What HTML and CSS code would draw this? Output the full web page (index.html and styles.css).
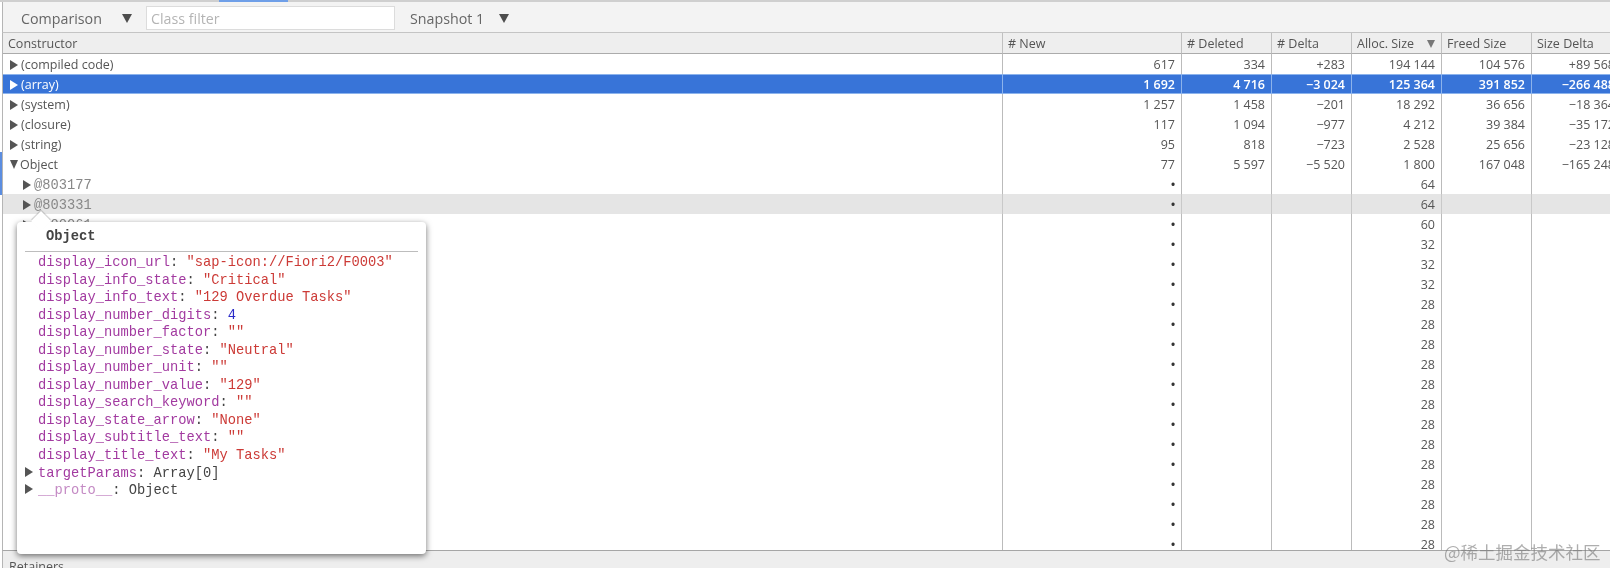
FILE: index.html
```html
<!DOCTYPE html>
<html lang="en">
<head>
<meta charset="utf-8">
<title>Heap snapshot comparison</title>
<link rel="stylesheet" href="styles.css">
</head>
<body>
<div class="app">
  <div class="tabstrip"><span class="tab-marker"></span></div>
  <div class="toolbar">
    <span class="tool-label label-view">Comparison</span><span class="drop"></span>
    <span class="filter">Class filter</span>
    <span class="tool-label label-snap">Snapshot 1</span><span class="drop"></span>
  </div>
  <div class="grid-wrap">
    <table class="grid">
      <colgroup>
        <col class="c-name"><col class="c-new"><col class="c-del"><col class="c-delta"><col class="c-alloc"><col class="c-freed"><col class="c-sdelta">
      </colgroup>
      <thead>
        <tr><th>Constructor</th><th># New</th><th># Deleted</th><th># Delta</th><th class="sorted">Alloc. Size<span class="sort"></span></th><th>Freed Size</th><th>Size Delta</th></tr>
      </thead>
      <tbody>
        <tr><td><i class="tri"></i>(compiled code)</td><td>617</td><td>334</td><td>+283</td><td>194 144</td><td>104 576</td><td>+89 568</td></tr>
        <tr class="selected"><td><i class="tri"></i>(array)</td><td>1 692</td><td>4 716</td><td>−3 024</td><td>125 364</td><td>391 852</td><td>−266 488</td></tr>
        <tr><td><i class="tri"></i>(system)</td><td>1 257</td><td>1 458</td><td>−201</td><td>18 292</td><td>36 656</td><td>−18 364</td></tr>
        <tr><td><i class="tri"></i>(closure)</td><td>117</td><td>1 094</td><td>−977</td><td>4 212</td><td>39 384</td><td>−35 172</td></tr>
        <tr><td><i class="tri"></i>(string)</td><td>95</td><td>818</td><td>−723</td><td>2 528</td><td>25 656</td><td>−23 128</td></tr>
        <tr><td><i class="tri open"></i>Object</td><td>77</td><td>5 597</td><td>−5 520</td><td>1 800</td><td>167 048</td><td>−165 248</td></tr>
        <tr><td class="child"><i class="tri"></i><span class="oid">@803177</span></td><td class="dot">•</td><td></td><td></td><td>64</td><td></td><td></td></tr>
        <tr class="hover"><td class="child"><i class="tri"></i><span class="oid">@803331</span></td><td class="dot">•</td><td></td><td></td><td>64</td><td></td><td></td></tr>
        <tr><td class="child"><i class="tri"></i><span class="oid">@800061</span></td><td class="dot">•</td><td></td><td></td><td>60</td><td></td><td></td></tr>
        <tr><td></td><td class="dot">•</td><td></td><td></td><td>32</td><td></td><td></td></tr>
        <tr><td></td><td class="dot">•</td><td></td><td></td><td>32</td><td></td><td></td></tr>
        <tr><td></td><td class="dot">•</td><td></td><td></td><td>32</td><td></td><td></td></tr>
        <tr><td></td><td class="dot">•</td><td></td><td></td><td>28</td><td></td><td></td></tr>
        <tr><td></td><td class="dot">•</td><td></td><td></td><td>28</td><td></td><td></td></tr>
        <tr><td></td><td class="dot">•</td><td></td><td></td><td>28</td><td></td><td></td></tr>
        <tr><td></td><td class="dot">•</td><td></td><td></td><td>28</td><td></td><td></td></tr>
        <tr><td></td><td class="dot">•</td><td></td><td></td><td>28</td><td></td><td></td></tr>
        <tr><td></td><td class="dot">•</td><td></td><td></td><td>28</td><td></td><td></td></tr>
        <tr><td></td><td class="dot">•</td><td></td><td></td><td>28</td><td></td><td></td></tr>
        <tr><td></td><td class="dot">•</td><td></td><td></td><td>28</td><td></td><td></td></tr>
        <tr><td></td><td class="dot">•</td><td></td><td></td><td>28</td><td></td><td></td></tr>
        <tr><td></td><td class="dot">•</td><td></td><td></td><td>28</td><td></td><td></td></tr>
        <tr><td></td><td class="dot">•</td><td></td><td></td><td>28</td><td></td><td></td></tr>
        <tr><td></td><td class="dot">•</td><td></td><td></td><td>28</td><td></td><td></td></tr>
        <tr><td></td><td class="dot">•</td><td></td><td></td><td>28</td><td></td><td></td></tr>
      </tbody>
    </table>
  </div>
  <div class="bottom-pane">Retainers</div>
  <span class="side-marker"></span>
  <div class="popover">
    <span class="pop-arrow"></span>
    <div class="pop-title">Object</div>
    <div class="pop-body">
      <div class="prop"><span class="k">display_icon_url</span>: <span class="s">"sap-icon://Fiori2/F0003"</span></div>
      <div class="prop"><span class="k">display_info_state</span>: <span class="s">"Critical"</span></div>
      <div class="prop"><span class="k">display_info_text</span>: <span class="s">"129 Overdue Tasks"</span></div>
      <div class="prop"><span class="k">display_number_digits</span>: <span class="n">4</span></div>
      <div class="prop"><span class="k">display_number_factor</span>: <span class="s">""</span></div>
      <div class="prop"><span class="k">display_number_state</span>: <span class="s">"Neutral"</span></div>
      <div class="prop"><span class="k">display_number_unit</span>: <span class="s">""</span></div>
      <div class="prop"><span class="k">display_number_value</span>: <span class="s">"129"</span></div>
      <div class="prop"><span class="k">display_search_keyword</span>: <span class="s">""</span></div>
      <div class="prop"><span class="k">display_state_arrow</span>: <span class="s">"None"</span></div>
      <div class="prop"><span class="k">display_subtitle_text</span>: <span class="s">""</span></div>
      <div class="prop"><span class="k">display_title_text</span>: <span class="s">"My Tasks"</span></div>
      <div class="prop"><i class="tri pop-tri"></i><span class="k">targetParams</span>: Array[0]</div>
      <div class="prop"><i class="tri pop-tri"></i><span class="k dim">__proto__</span>: Object</div>
    </div>
  </div>
  <span class="watermark">@稀土掘金技术社区</span>
</div>
</body>
</html>
```
FILE: styles.css
```css
* { box-sizing: border-box; }
html, body { margin: 0; padding: 0; background: #fff; }
body { font-family: "Open Sans", "Noto Sans", sans-serif; font-size: 12.5px; color: #4a4a4a; }

.app {
  position: relative;
  width: 1610px;
  height: 568px;
  overflow: hidden;
  display: flex;
  flex-direction: column;
  background: #fff;
  filter: blur(0.35px);
}

.tabstrip {
  height: 2px;
  flex: none;
  background: #cfcfcf;
  padding-left: 219px;
  display: flex;
}
.tab-marker { width: 69px; height: 2px; background: #6f9fe8; }

.toolbar {
  flex: none;
  height: 31px;
  margin-left: 2px;
  border-left: 1px solid #b5b5b5;
  border-bottom: 1px solid #c4c4c4;
  background: #f3f3f3;
  display: flex;
  align-items: center;
  padding-left: 18px;
  padding-top: 1px;
  color: #666;
  font-size: 14.25px;
}
.tool-label { padding-top: 2px; }
.label-view { width: 101px; }
.label-snap { margin-left: 15px; width: 89px; }
.drop {
  width: 0; height: 0;
  margin-top: 1px;
  border-left: 5px solid transparent;
  border-right: 5px solid transparent;
  border-top: 9px solid #4d4d4d;
}
.filter {
  margin-left: 14px;
  width: 249px;
  height: 24px;
  line-height: 24px;
  padding-left: 4px;
  background: #fff;
  border: 1px solid #dcdcdc;
  color: #b4b4b4;
}

.grid-wrap {
  flex: 1;
  min-height: 0;
  margin-left: 2px;
  border-left: 1px solid #b5b5b5;
  overflow: hidden;
}
.grid {
  table-layout: fixed;
  border-collapse: separate;
  border-spacing: 0;
  width: 1618px;
}
.c-name { width: 999px; }
.c-new { width: 179px; }
.c-del { width: 90px; }
.c-delta { width: 80px; }
.c-alloc { width: 90px; }
.c-freed { width: 90px; }
.c-sdelta { width: 90px; }

.grid th {
  height: 21px;
  padding: 0 0 0 5px;
  background: #eeeeee;
  border-bottom: 1px solid #ababab;
  border-left: 1px solid #c0c0c0;
  font-weight: 400;
  font-size: 12.5px;
  text-align: left;
  color: #555;
  white-space: nowrap;
  position: relative;
}
.grid th:first-child { border-left: 0; }
.sort {
  position: absolute;
  right: 6px;
  top: 7px;
  width: 0; height: 0;
  border-left: 4.5px solid transparent;
  border-right: 4.5px solid transparent;
  border-top: 8px solid #777;
}

.grid td {
  height: 20px;
  padding: 0 6px 0 0;
  border-left: 1px solid #bbb;
  text-align: right;
  white-space: nowrap;
  overflow: hidden;
  line-height: 19px;
  color: #555;
}
.grid td:first-child {
  border-left: 0;
  text-align: left;
  padding-left: 7px;
}
.grid td.child { padding-left: 20px; }
.grid td.dot { font-size: 15px; line-height: 20px; color: #333; padding-right: 5px; }

.tri {
  display: inline-block;
  width: 0; height: 0;
  margin-right: 3px;
  border-top: 5px solid transparent;
  border-bottom: 5px solid transparent;
  border-left: 8px solid #555;
  vertical-align: -1px;
}
.tri.open {
  border-left: 4.5px solid transparent;
  border-right: 4.5px solid transparent;
  border-top: 9px solid #555;
  border-bottom: 0;
  margin-right: 2px;
  vertical-align: 0;
}
.oid {
  font-family: "Liberation Mono", "DejaVu Sans Mono", monospace;
  font-size: 13.75px;
  line-height: 14px;
  color: #888;
}

.grid .selected td {
  background: #3874d8;
  color: #fff;
  font-weight: 600;
  border-top: 1px solid #8cb3ec;
  border-bottom: 1px solid #8cb3ec;
  border-left-color: #8cb3ec;
  line-height: 17px;
}
.grid .selected td:first-child { font-weight: 400; }
.selected .tri { border-left-color: #fff; }
.grid .hover td { background: #e5e5e5; border-left-color: #c9c9c9; }

.bottom-pane {
  flex: none;
  height: 18px;
  margin-left: 2px;
  padding-left: 6px;
  border-top: 1px solid #a6a6a6;
  border-left: 1px solid #b5b5b5;
  background: #eeeeee;
  line-height: 32px;
  overflow: hidden;
  color: #555;
}

.side-marker {
  position: absolute;
  left: 0;
  top: 152px;
  width: 2px;
  height: 43px;
  background: #5b8de0;
}

.popover {
  position: absolute;
  left: 17px;
  top: 222px;
  width: 409px;
  height: 332px;
  padding: 0 8px;
  background: #fff;
  border-radius: 4px;
  box-shadow: 0 2px 6px rgba(0, 0, 0, 0.55);
  font-family: "Liberation Mono", "DejaVu Sans Mono", monospace;
  font-size: 13.75px;
  color: #444;
}
.pop-arrow {
  position: absolute;
  left: 17px;
  top: -8px;
  width: 14px;
  height: 14px;
  background: #fff;
  transform: rotate(45deg);
  box-shadow: -1px -1px 1px rgba(0, 0, 0, 0.2);
}
.pop-title {
  position: relative;
  height: 30px;
  padding-left: 21px;
  line-height: 30px;
  font-weight: 700;
  color: #444;
  border-bottom: 1px solid #bdbdbd;
}
.pop-body { padding-top: 2px; }
.prop { height: 17.55px; line-height: 17.55px; padding-left: 13px; white-space: nowrap; }
.k { color: #a23aa0; }
.k.dim { color: #c48ac4; }
.s { color: #cc3a36; }
.n { color: #2a2ac8; }
.pop-tri { margin-left: -13px; margin-right: 5px; vertical-align: 0; }

.watermark {
  position: absolute;
  left: 1444px;
  top: 540px;
  font-family: "Noto Sans CJK SC", "Open Sans", sans-serif;
  font-size: 17.5px;
  line-height: 24px;
  color: rgba(120, 120, 120, 0.6);
  white-space: nowrap;
}
```
